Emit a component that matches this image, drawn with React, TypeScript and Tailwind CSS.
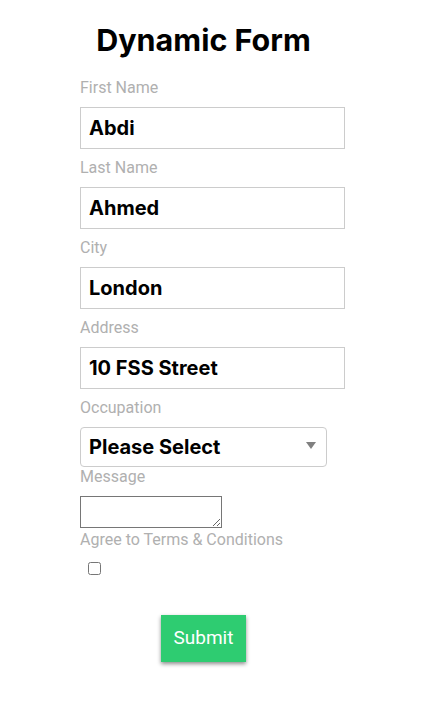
import { ChangeEvent, useState } from "react";

const fields = [
  { name: "firstName", label: "First Name", value: "Abdi" },
  { name: "lastName", label: "Last Name", value: "Ahmed" },
  { name: "city", label: "City", value: "London" },
  { name: "address", label: "Address", value: "10 FSS Street" },
];

export default function App() {
  const [values, setValues] = useState<Record<string, string>>(
    Object.fromEntries(fields.map((f) => [f.name, f.value]))
  );
  const [agree, setAgree] = useState(false);

  const onChange = (e: ChangeEvent<HTMLInputElement>) =>
    setValues((v) => ({ ...v, [e.target.name]: e.target.value }));

  return (
    <div className="min-h-screen bg-white font-['Roboto',sans-serif]">
      <form className="mx-auto flex w-[247px] flex-col pt-5 -translate-x-[7px]" onSubmit={(e) => e.preventDefault()}>
        <h1 className="h-10 whitespace-nowrap text-center font-['Inter',sans-serif] text-[30.5px] font-bold leading-10 text-black">
          Dynamic Form
        </h1>
        <div className="h-[18px]" />

        {fields.map((f) => (
          <div key={f.name} className="flex flex-col">
            <label className="h-5 text-[16px] leading-5 text-[#b0b0b0]">{f.label}</label>
            <input
              name={f.name}
              value={values[f.name]}
              onChange={onChange}
              className="mt-[9px] mb-[9px] h-[42px] w-[265px] border border-[#cccccc] px-2 font-['Inter',sans-serif] text-[20px] font-bold text-black outline-none"
            />
          </div>
        ))}

        <label className="h-5 text-[16px] leading-5 text-[#b0b0b0]">Occupation</label>
        <div className="relative mt-[9px] h-10 w-[247px]">
          <select className="h-10 w-full appearance-none rounded border border-[#cccccc] bg-white px-2 font-['Inter',sans-serif] text-[20px] font-bold text-black outline-none">
            <option>Please Select</option>
            <option>Engineer</option>
            <option>Teacher</option>
            <option>Doctor</option>
          </select>
          <span className="pointer-events-none absolute right-[11px] top-[15px] h-0 w-0 border-x-[5px] border-t-[7px] border-x-transparent border-t-[#808080]" />
        </div>

        <label className="h-5 text-[16px] leading-5 text-[#b0b0b0]">Message</label>
        <textarea className="mt-[9px] block h-8 w-[142px] border border-[#767676] outline-none" />

        <label className="mt-[2px] h-5 text-[16px] leading-5 text-[#b0b0b0]">Agree to Terms &amp; Conditions</label>
        <div className="mt-[12px] flex h-[13px] pl-2">
          <input
            type="checkbox"
            checked={agree}
            onChange={(e) => setAgree(e.target.checked)}
            className="m-0 h-[13px] w-[13px]"
          />
        </div>

        <div className="mt-10 flex justify-center">
          <button
            type="submit"
            className="h-[47px] w-[85px] bg-[#2ecc71] text-[19px] text-white shadow-[0_2px_4px_rgba(0,0,0,0.45)]"
          >
            Submit
          </button>
        </div>
      </form>
    </div>
  );
}
